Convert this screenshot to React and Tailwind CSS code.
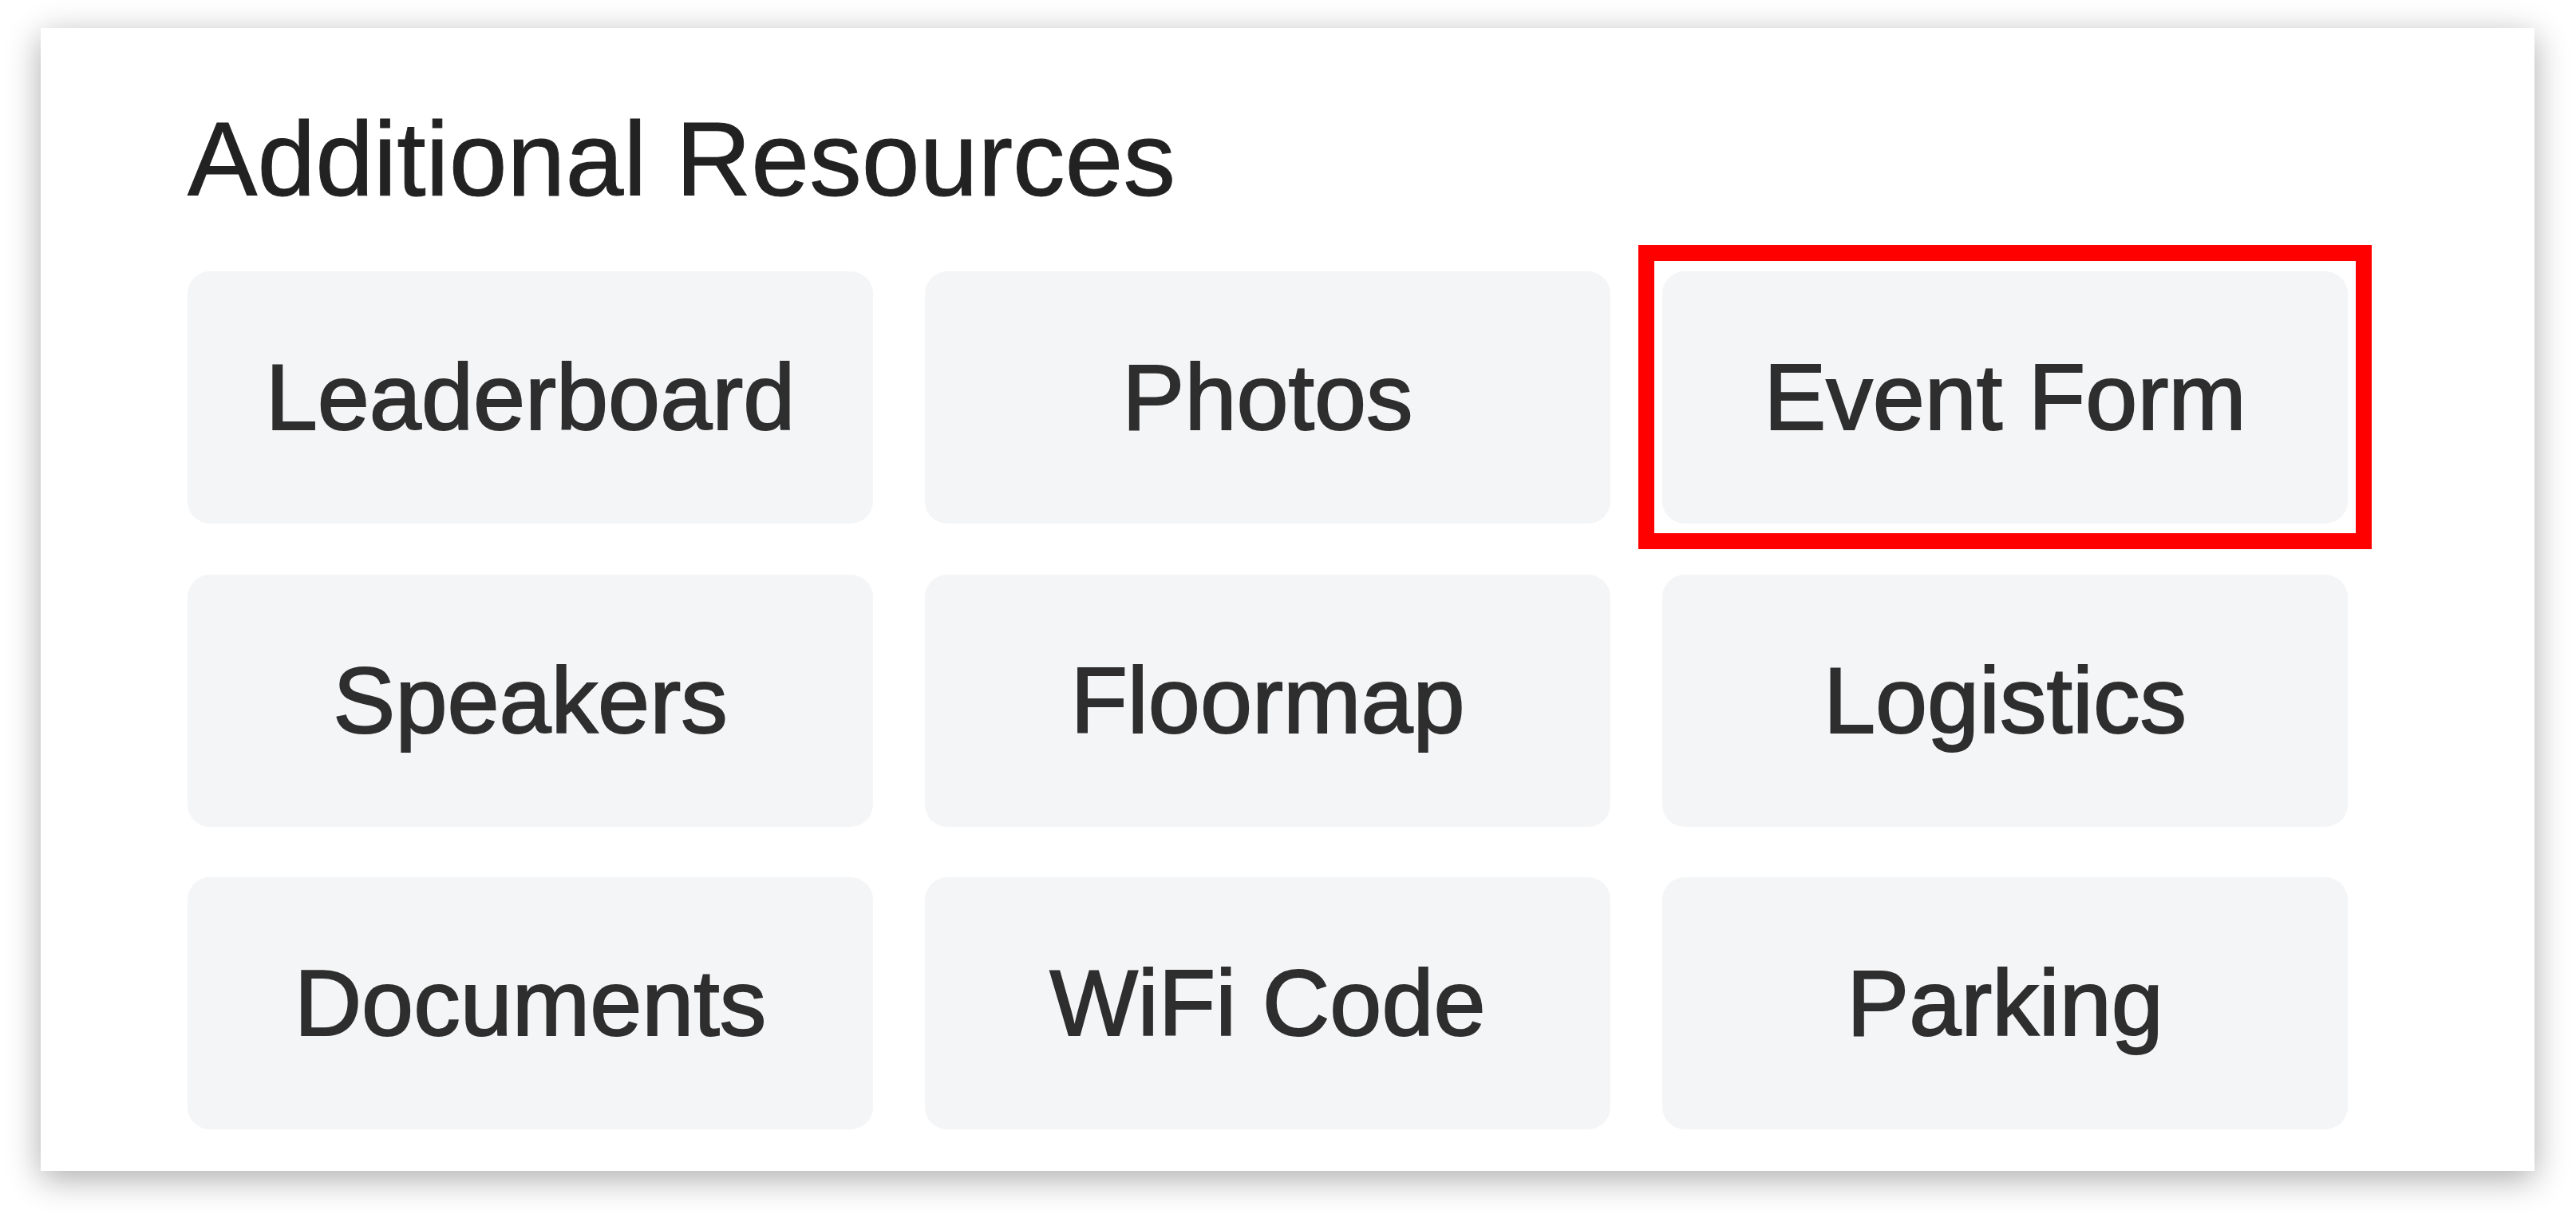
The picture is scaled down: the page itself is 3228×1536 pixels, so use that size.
import React from "react";

const items = [
  "Leaderboard",
  "Photos",
  "Event Form",
  "Speakers",
  "Floormap",
  "Logistics",
  "Documents",
  "WiFi Code",
  "Parking",
];

export default function App() {
  return (
    <div
      className="w-[3228px] h-[1536px] bg-white pt-[35px] pl-[51px]"
      style={{ fontFamily: '"Liberation Sans", Arial, sans-serif' }}
    >
      <div className="w-[3125px] h-[1432px] bg-white shadow-[0_10px_40px_rgba(0,0,0,0.33)] pt-[92px] pl-[184px] pb-[52px]">
        <h2 className="text-[131px] leading-[146px] font-normal text-[#222222] mb-[67px] whitespace-nowrap [-webkit-text-stroke:1px_#222222]">
          Additional Resources
        </h2>
        <div className="grid grid-cols-[repeat(3,859px)] auto-rows-[316px] gap-x-[65px] gap-y-[63.5px]">
          {items.map((label) => (
            <div key={label} className="relative">
              <div className="w-full h-full rounded-[28px] bg-[#f4f5f7] flex items-center justify-center text-[117px] text-[#2e2e2e] whitespace-nowrap [-webkit-text-stroke:2px_#2e2e2e]">
                {label}
              </div>
              {label === "Event Form" && (
                <div className="absolute -left-[30px] -right-[30px] -top-[33px] -bottom-[32px] border-[20px] border-[#ff0000] pointer-events-none" />
              )}
            </div>
          ))}
        </div>
      </div>
    </div>
  );
}
